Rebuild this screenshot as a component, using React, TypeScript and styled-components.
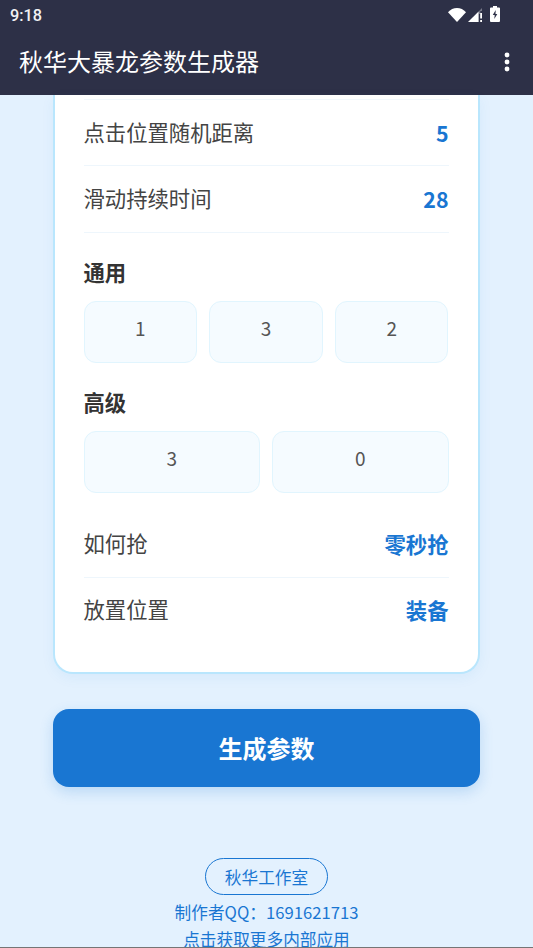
import React from 'react';
import styled, { createGlobalStyle } from 'styled-components';

const GlobalStyle = createGlobalStyle`
  html, body {
    margin: 0;
    padding: 0;
    height: 100%;
    overflow: hidden;
    background: #e3f1fe;
  }
  * {
    box-sizing: border-box;
  }
`;

const Screen = styled('div')`
  position: relative;
  width: 533px;
  height: 948px;
  overflow: hidden;
  display: flex;
  flex-direction: column;
  background: #e3f1fe;
  font-family: 'Noto Sans CJK SC', 'Noto Sans', sans-serif;
  border-bottom: 1px solid #757575;
`;

const Header = styled('header')`
  flex: none;
  height: 95px;
  background: #2d3047;
  color: #fff;
`;

const StatusBar = styled('div')`
  height: 30px;
  display: flex;
  align-items: center;
  justify-content: space-between;
  padding: 0 33px 0 10px;
`;

const Clock = styled('span')`
  font-family: Roboto, sans-serif;
  font-size: 16.3px;
  font-weight: 500;
  color: #f1f1f4;
`;

const StatusIcons = styled('div')`
  display: flex;
  align-items: flex-end;
  gap: 2px;
  margin-bottom: 3px;
`;

const Toolbar = styled('div')`
  height: 65px;
  display: flex;
  align-items: center;
  justify-content: space-between;
  padding: 0 23px 2px 19px;
`;

const Title = styled('h1')`
  margin: 0;
  font-size: 24px;
  font-weight: 400;
  line-height: 1;
  position: relative;
  top: -1px;
`;

const Content = styled('main')`
  flex: 1;
  display: flex;
  flex-direction: column;
  padding: 0 53px;
`;

const Card = styled('section')`
  height: 579px;
  padding: 4px 29.5px 0 28.5px;
  background: #fff;
  border: 2.5px solid #b9e6fd;
  border-top: 0;
  border-radius: 0 0 20px 20px;
  box-shadow: 0 4px 14px rgba(25, 118, 210, 0.06);
`;

const Row = styled('div')<{ $height: number; $first?: boolean; $last?: boolean; $offset?: number }>`
  height: ${({ $height }) => $height}px;
  margin-top: ${({ $offset }) => $offset || 0}px;
  display: flex;
  align-items: center;
  justify-content: space-between;
  border-top: ${({ $first }) => ($first ? '1px solid #f2f8fd' : '0')};
  border-bottom: ${({ $last }) => ($last ? '0' : '1px solid #eef6fc')};
`;

const Label = styled('span')`
  font-size: 21.33px;
  color: #444;
  line-height: 1;
  position: relative;
  top: -1px;
`;

const Value = styled('span')`
  font-size: 21.33px;
  font-weight: 700;
  color: #1976d2;
  line-height: 1;
`;

const SectionTitle = styled('h2')`
  margin: 0 0 17px;
  font-size: 21.33px;
  font-weight: 700;
  color: #333;
  line-height: 24px;
`;

const Group = styled('div')`
  padding-top: 27px;
`;

const Chips = styled('div')<{ $count: number }>`
  display: grid;
  grid-template-columns: repeat(${({ $count }) => $count}, 1fr);
  gap: 12px;
`;

const Chip = styled('div')`
  height: 62px;
  padding-bottom: 10px;
  display: flex;
  align-items: center;
  justify-content: center;
  background: #f5fbff;
  border: 1.3px solid #e1f5fe;
  border-radius: 12px;
  font-size: 19px;
  color: #555;
`;

const Generate = styled('button')`
  height: 78px;
  margin-top: 35px;
  padding-bottom: 2px;
  border: 0;
  border-radius: 16px;
  background: #1976d2;
  color: #fff;
  font-family: inherit;
  font-size: 24px;
  font-weight: 700;
  box-shadow: 0 5px 14px rgba(25, 118, 210, 0.2);
`;

const Footer = styled('footer')`
  margin-top: 71px;
  display: flex;
  flex-direction: column;
  align-items: center;
  color: #1976d2;
  font-size: 16.66px;
`;

const Studio = styled('div')`
  width: 123px;
  height: 37px;
  display: flex;
  align-items: center;
  justify-content: center;
  border: 1.3px solid #1976d2;
  border-radius: 19px;
`;

const FooterLine = styled('div')<{ $gap: number }>`
  margin-top: ${({ $gap }) => $gap}px;
  line-height: 24px;
  white-space: nowrap;
`;

const Wifi = () => (
  <svg width="18" height="14" viewBox="0 0 18 14">
    <path d="M0 4.2C2.4 1.6 5.6 0 9 0s6.6 1.6 9 4.2L9 14z" fill="#fff" />
  </svg>
);

const Signal = () => (
  <svg width="14" height="14" viewBox="0 0 14 14">
    <path d="M0 14 L10.6 3.4 V14z" fill="#fff" />
    <path d="M10.6 3.4 L14 0 V3 H12.4 V6 H10.6z" fill="#fff" opacity="0.35" />
    <rect x="12.2" y="5" width="1.8" height="5.5" fill="#fff" />
    <rect x="12.2" y="12" width="1.8" height="2" fill="#fff" />
  </svg>
);

const Battery = () => (
  <svg width="10" height="16" viewBox="0 0 10 16" style={{ marginLeft: 6 }}>
    <path d="M3 0h4v1.5h2a1 1 0 0 1 1 1V15a1 1 0 0 1-1 1H1a1 1 0 0 1-1-1V2.5a1 1 0 0 1 1-1h2z" fill="#fff" />
    <path d="M5.7 4 2.8 9h1.9l-.4 4L7.3 8H5.5z" fill="#2d3047" />
  </svg>
);

const MoreIcon = () => (
  <svg width="6" height="20" viewBox="0 0 6 20">
    <circle cx="3" cy="3" r="2.4" fill="#fff" />
    <circle cx="3" cy="10" r="2.4" fill="#fff" />
    <circle cx="3" cy="17" r="2.4" fill="#fff" />
  </svg>
);

export default function App() {
  return (
    <Screen>
      <GlobalStyle />
      <Header>
        <StatusBar>
          <Clock>9:18</Clock>
          <StatusIcons>
            <Wifi />
            <Signal />
            <Battery />
          </StatusIcons>
        </StatusBar>
        <Toolbar>
          <Title>秋华大暴龙参数生成器</Title>
          <MoreIcon />
        </Toolbar>
      </Header>
      <Content>
        <Card>
          <Row $height={67} $first>
            <Label>点击位置随机距离</Label>
            <Value>5</Value>
          </Row>
          <Row $height={67}>
            <Label>滑动持续时间</Label>
            <Value>28</Value>
          </Row>
          <Group>
            <SectionTitle>通用</SectionTitle>
            <Chips $count={3}>
              <Chip>1</Chip>
              <Chip>3</Chip>
              <Chip>2</Chip>
            </Chips>
          </Group>
          <Group>
            <SectionTitle>高级</SectionTitle>
            <Chips $count={2}>
              <Chip>3</Chip>
              <Chip>0</Chip>
            </Chips>
          </Group>
          <Row $height={67} $offset={18}>
            <Label>如何抢</Label>
            <Value>零秒抢</Value>
          </Row>
          <Row $height={63} $last>
            <Label>放置位置</Label>
            <Value>装备</Value>
          </Row>
        </Card>
        <Generate>生成参数</Generate>
        <Footer>
          <Studio>秋华工作室</Studio>
          <FooterLine $gap={5}>制作者QQ：1691621713</FooterLine>
          <FooterLine $gap={3}>点击获取更多内部应用</FooterLine>
        </Footer>
      </Content>
    </Screen>
  );
}
